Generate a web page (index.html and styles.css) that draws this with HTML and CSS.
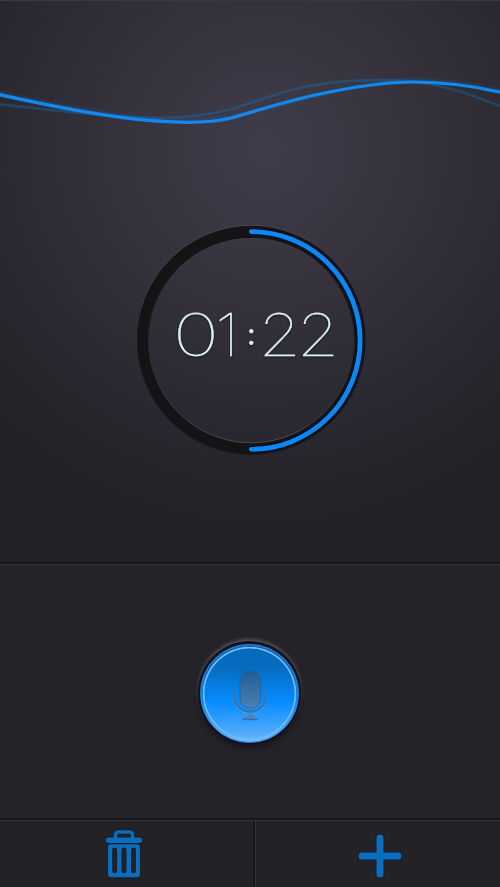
FILE: index.html
```html
<!DOCTYPE html>
<html lang="en">
<head>
<meta charset="utf-8">
<title>Voice Recorder</title>
<link rel="stylesheet" href="styles.css">
</head>
<body>
<main class="recorder">
  <section class="display">
    <svg class="wave" viewBox="0 0 500 140" aria-hidden="true">
      <defs><filter id="soft" x="-10%" y="-50%" width="120%" height="200%"><feGaussianBlur stdDeviation="1.1"/></filter></defs>
      <path class="wave-glow" filter="url(#soft)" d="M-2 92.3C60 106 130 120.5 188 120.5C258 120 340 80 415 80C445 80 475 84.5 502 90.5"/>
      <path class="wave-echo" d="M-2 104.5C50 109 100 117.5 160 117.8C185 118 210 115 235 108C255 102 275 93.5 300 88C335 80 370 79.5 400 80.5C435 82 468 93 502 107"/>
      <path class="wave-main" d="M-2 94.3C60 108 130 122.3 188 122.3C205 122.3 218 121.5 231 118C258 110.5 285 101.5 315 95C345 88.5 380 82 415 82C445 82 475 86.5 502 92.5"/>
    </svg>
    <svg class="dial" viewBox="0 0 250 250" role="img" aria-label="01:22">
      <defs>
        <linearGradient id="outerEdge" x1="0" y1="0" x2="0" y2="1"><stop offset="0" stop-color="#514c59"/><stop offset=".5" stop-color="#2f2d36"/><stop offset="1" stop-color="#1b1b20"/></linearGradient>
        <linearGradient id="innerEdge" x1="0" y1="0" x2="0" y2="1"><stop offset="0" stop-color="#111116"/><stop offset=".5" stop-color="#292831"/><stop offset="1" stop-color="#4b4752"/></linearGradient>
      </defs>
      <circle cx="126.3" cy="125" r="114.5" fill="none" stroke="url(#outerEdge)"/>
      <circle class="track" cx="126.3" cy="125.1" r="108.6"/>
      <circle cx="126.3" cy="125" r="102.8" fill="none" stroke="url(#innerEdge)"/>
      <path class="progress-rim" d="M126.3 16.6A108.8 108.8 0 0 1 126.3 234.3"/>
      <path class="progress" d="M126.3 16.6A108.8 108.8 0 0 1 126.3 234.3"/>
      <g class="time">
        <text transform="translate(47.8 141) scale(1.33 1)">0</text>
        <text transform="translate(90.2 141) scale(1.1 1)">1</text>
        <text class="colon" x="126.3" y="129.7">:</text>
        <text transform="translate(133.4 141) scale(1.16 1)" x="0 33">22</text>
      </g>
    </svg>
  </section>
  <section class="controls">
    <button class="record" aria-label="Record">
      <svg class="mic" viewBox="0 0 38 54" aria-hidden="true">
        <defs>
          <linearGradient id="micFill" x1="0" y1="0" x2="0" y2="1"><stop offset="0" stop-color="#215c98"/><stop offset="1" stop-color="#4c82b2"/></linearGradient>
        </defs>
        <path class="mic-light" d="M2.8 25v2.5a16.4 16 0 0 0 32.8 0V25"/>
        <path class="mic-stand" d="M2.8 24v2.5a16.4 16 0 0 0 32.8 0V24"/>
        <rect x="9" y="2" width="20.5" height="37" rx="9" fill="url(#micFill)" stroke="#235f9b" stroke-width=".8"/>
        <path d="M16.5 44.5h5.5v2.5l5 2.2v1.3h-15.5v-1.3l5-2.2z" fill="#4985bb"/>
        <path d="M11.5 50.5h15.5" stroke="#2b6fac" stroke-width="1.3"/>
      </svg>
    </button>
  </section>
  <nav class="toolbar">
    <button class="tool tool-delete" aria-label="Delete">
      <svg class="trash" viewBox="0 0 38 50" aria-hidden="true">
        <path d="M10.5 10V6q0-3 3-3h11q3 0 3 3v4" fill="none" stroke="#0b6dbd" stroke-width="3.6"/>
        <rect x="1" y="8.4" width="36" height="5.5" rx="2.7" fill="#0b6dbd"/>
        <path fill="#0b6dbd" fill-rule="evenodd" d="M6 15.2H32Q35 15.2 35 18.2V45Q35 48.3 31.7 48.3H6.3Q3 48.3 3 45V18.2Q3 15.2 6 15.2ZM7.2 20.9V41.7a2.45 2.45 0 0 0 4.9 0V20.9a2.45 2.45 0 0 0-4.9 0ZM16.6 20.9V41.7a2.45 2.45 0 0 0 4.9 0V20.9a2.45 2.45 0 0 0-4.9 0ZM26 20.9V41.7a2.45 2.45 0 0 0 4.9 0V20.9a2.45 2.45 0 0 0-4.9 0Z"/>
      </svg>
    </button>
    <button class="tool tool-add" aria-label="Add">
      <svg class="plus" viewBox="0 0 44 44" aria-hidden="true"><path d="M22 4v36M4 22h36" stroke="#0b6dbd" stroke-width="7" stroke-linecap="round"/></svg>
    </button>
  </nav>
</main>
</body>
</html>
```
FILE: styles.css
```css
* { box-sizing: border-box; }
body { margin: 0; background: #232227; font-family: Inter, "Liberation Sans", sans-serif; }
button { appearance: none; border: 0; padding: 0; background: none; }
svg { display: block; }

.recorder { width: 500px; height: 887px; display: flex; flex-direction: column; overflow: hidden; }
.display {
  height: 562px;
  display: flex;
  flex-direction: column;
  border-top: 1px solid #3a3840;
  background: radial-gradient(circle 395px at 266px 148px, #403c4b 0%, #36333e 35%, #2b2931 67%, #222126 100%);
}
.wave { width: 500px; height: 140px; margin-top: -1px; flex: none; }
.wave path { fill: none; }
.wave-main { stroke: #1389ee; stroke-width: 3.2; }
.wave-echo { stroke: #1474b9; stroke-width: 2.6; opacity: .36; }
.wave-glow { stroke: #1474b9; stroke-width: 3; opacity: .28; }

.dial { width: 250px; height: 250px; margin: 75px 0 0 125px; flex: none; }
.track { fill: none; stroke: #141416; stroke-width: 11.4; }
.progress { fill: none; stroke: #0c87f4; stroke-width: 4.8; stroke-linecap: round; }
.progress-rim { fill: none; stroke: #07101d; stroke-width: 7; stroke-linecap: round; }
.time { font-size: 59px; font-weight: 100; fill: #dcf2fb; stroke: #dcf2fb; stroke-width: .35; filter: drop-shadow(0 1px 1px #18181f); }
.colon { font-size: 30px; font-weight: 500; stroke: none; text-anchor: middle; }

.controls {
  height: 256px;
  display: flex;
  justify-content: center;
  align-items: flex-start;
  padding-top: 80px;
  border-top: 2px solid #18171c;
  box-shadow: inset 0 1px #302f34;
  background: #242328;
}
.record {
  width: 99px;
  height: 99px;
  margin-right: 1px;
  display: grid;
  place-items: center;
  border-radius: 50%;
  background: radial-gradient(circle, transparent 44.6px, #75b9fa 45.4px, #75b9fa 46.3px, transparent 47px), linear-gradient(#056bbd 22%, #058bff 58%, #4aa8fb 88%, #69baff);
  border: 1px solid #3486cf;
  box-shadow: 0 -1px 0 2px #121225, 0 0 0 2px #121225, 0 -3px 4px 1px #716b74, 0 3px 5px 2px #15151b;
}
.mic { width: 38px; height: 54px; margin-top: 5px; }
.mic-stand { fill: none; stroke: #3277b6; stroke-width: 2.8; stroke-linecap: round; }
.mic-light { fill: none; stroke: #66adf0; stroke-width: 2.8; stroke-linecap: round; opacity: .5; }

.toolbar {
  height: 69px;
  display: grid;
  grid-template-columns: 255px 1fr;
  border-top: 2px solid #17161b;
  background: #232227;
}
.tool { display: flex; align-items: flex-start; border-top: 1px solid #323136; }
.tool-delete { padding: 8px 0 0 105px; border-right: 2px solid #17161b; }
.tool-add { padding: 13px 0 0 102px; border-left: 1px solid #323136; }
.trash { width: 38px; height: 50px; filter: drop-shadow(0 0 1px #111721); }
.plus { width: 44px; height: 44px; filter: drop-shadow(0 0 1px #111721); }
```
